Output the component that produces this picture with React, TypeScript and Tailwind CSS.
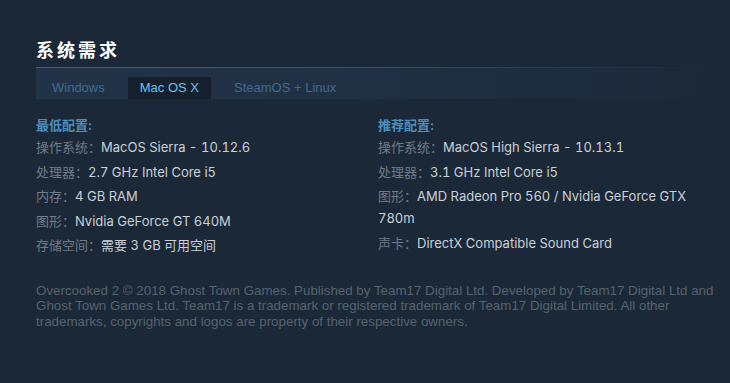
import React from "react";

const minReq: [string, string][] = [
  ["操作系统：", "MacOS Sierra - 10.12.6"],
  ["处理器：", "2.7 GHz Intel Core i5"],
  ["内存：", "4 GB RAM"],
  ["图形：", "Nvidia GeForce GT 640M"],
  ["存储空间：", "需要 3 GB 可用空间"],
];

const recReq: [string, string][] = [
  ["操作系统：", "MacOS High Sierra - 10.13.1"],
  ["处理器：", "3.1 GHz Intel Core i5"],
  ["图形：", "AMD Radeon Pro 560 / Nvidia GeForce GTX 780m"],
  ["声卡：", "DirectX Compatible Sound Card"],
];

function Column({ title, rows }: { title: string; rows: [string, string][] }) {
  return (
    <div className="flex flex-col">
      <div className="text-[13px] leading-[22px] font-semibold text-[#4b8fbe]">{title}</div>
      {rows.map(([k, v]) => (
        <div key={k} className="text-[13px] leading-[22px] mb-[2.5px]">
          <span className="text-[#6f7b87]">{k}</span>
          <span className="text-[#c9d0d6] tabular-nums">{v}</span>
        </div>
      ))}
    </div>
  );
}

export default function App() {
  return (
    <div className="w-[730px] h-[383px] bg-[#1b2838] pt-[36px] pl-[36px] pr-[10px] font-[family-name:Inter,'Noto_Sans_CJK_SC',sans-serif]">
      <div className="text-[18px] leading-[26px] tracking-[3px] font-semibold text-white mb-[5px] font-[family-name:'Noto_Sans_CJK_SC',sans-serif]">
        系统需求
      </div>
      <div className="h-px bg-gradient-to-r from-[#3b6686] via-[#2f5270] to-transparent" />
      <div className="h-[31px] bg-gradient-to-r from-[#213347] via-[#1f3042] to-[#1b2838] flex items-end pl-[4px] gap-[11px] font-[family-name:'Liberation_Sans',Arial,sans-serif] text-[13px]">
        <div className="h-[22px] px-[12px] flex items-center text-[#3f6b8f]">Windows</div>
        <div className="h-[22px] px-[12px] flex items-center text-[#67c1f5] bg-[#16202d]">Mac OS X</div>
        <div className="h-[22px] px-[12px] flex items-center text-[#3f6b8f]">SteamOS + Linux</div>
      </div>
      <div className="grid grid-cols-2 mt-[15px]">
        <Column title="最低配置:" rows={minReq} />
        <Column title="推荐配置:" rows={recReq} />
      </div>
      <div className="mt-[24px] text-[13.35px] leading-[15.6px] text-[#56636f] font-[family-name:'Liberation_Sans',Arial,sans-serif]">
        Overcooked 2 © 2018 Ghost Town Games. Published by Team17 Digital Ltd. Developed by Team17 Digital Ltd and
        Ghost Town Games Ltd. Team17 is a trademark or registered trademark of Team17 Digital Limited. All other
        trademarks, copyrights and logos are property of their respective owners.
      </div>
    </div>
  );
}
